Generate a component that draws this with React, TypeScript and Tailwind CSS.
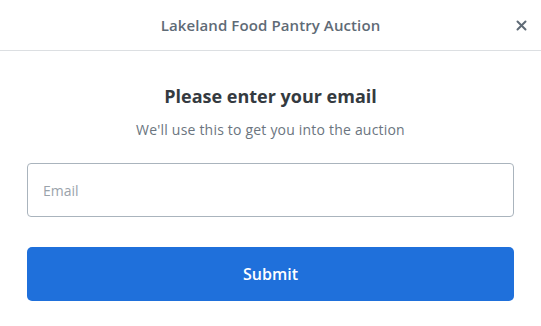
export default function App() {
  return (
    <div className="w-[541px] h-[326px] bg-white font-['Open_Sans','Liberation_Sans',sans-serif]">
      {/* header */}
      <div className="relative flex items-center justify-center h-[51px] border-b border-[#dcdfe2]">
        <div className="text-[15px] font-semibold text-[#5f6b76] tracking-[0.1px]">
          Lakeland Food Pantry Auction
        </div>
        <button className="absolute right-[14px] top-[19px] w-[12px] h-[12px] flex items-center justify-center">
          <svg width="11" height="11" viewBox="0 0 11 11">
            <path
              d="M1.5 1.5 L9.5 9.5 M9.5 1.5 L1.5 9.5"
              stroke="#5f6b76"
              strokeWidth="2"
              strokeLinecap="round"
            />
          </svg>
        </button>
      </div>

      {/* body */}
      <div className="px-[27px] flex flex-col items-center">
        <div className="mt-[32px] text-[18px] font-bold text-[#343a40] leading-[26px]">
          Please enter your email
        </div>
        <div className="mt-[11px] text-[14px] tracking-[0.2px] text-[#6b7580] leading-[20px]">
          We'll use this to get you into the auction
        </div>
        <input
          type="email"
          placeholder="Email"
          className="mt-[23px] w-full h-[54px] border border-[#aab4bd] rounded-[4px] px-[15px] text-[14px] text-[#343a40] placeholder:text-[#9aa3ab] outline-none"
        />
        <button className="mt-[30px] w-full h-[54px] rounded-[5px] bg-[#1f70db] text-white text-[16px] font-semibold">
          Submit
        </button>
      </div>
    </div>
  );
}
